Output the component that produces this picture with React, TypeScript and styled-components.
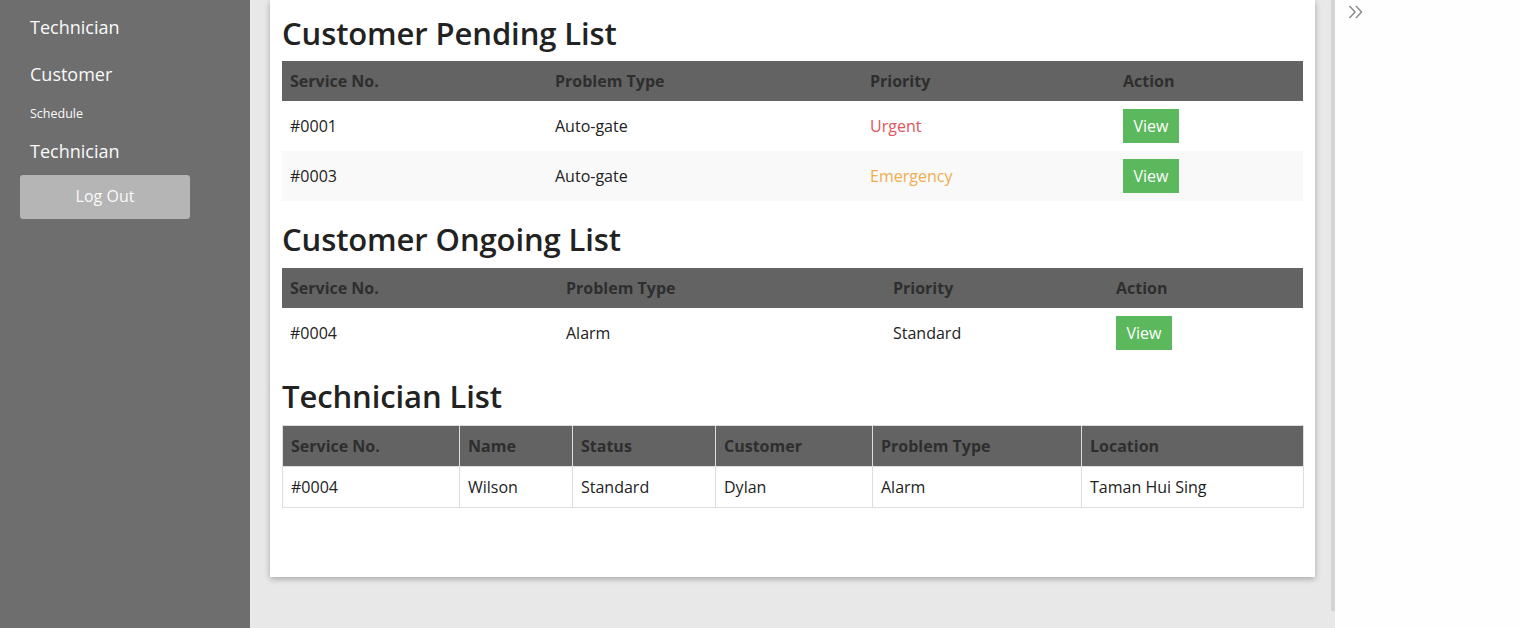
import React from "react";
import styled, { createGlobalStyle } from "styled-components";

const GlobalStyle = createGlobalStyle`
  html, body { margin: 0; padding: 0; }
  body {
    font-family: "Open Sans", "Noto Sans", "Liberation Sans", sans-serif;
    font-size: 16px;
    line-height: 1.42857;
    color: #333;
    overflow: hidden;
  }
  * { box-sizing: border-box; }
`;

const Layout = styled.div`
  display: flex;
  width: 1520px;
  height: 628px;
  overflow: hidden;
`;

const Sidebar = styled.nav`
  width: 250px;
  flex: 0 0 250px;
  background: #6e6e6e;
  padding-top: 4px;
  display: flex;
  flex-direction: column;
`;

const NavLink = styled.a<{ $small?: boolean }>`
  display: block;
  color: #fafafa;
  text-decoration: none;
  padding: ${(p) => (p.$small ? "7px 30px 5px" : "10px 30px 11px")};
  font-size: ${(p) => (p.$small ? "12.5px" : "18px")};
  line-height: ${(p) => (p.$small ? "18px" : "26px")};
`;

const LogOutButton = styled.button`
  margin-left: 20px;
  width: 170px;
  height: 44px;
  border: none;
  border-radius: 3px;
  background: #b5b5b5;
  color: #fafafa;
  font-family: inherit;
  font-size: 16px;
  padding-bottom: 3px;
`;

const Main = styled.main`
  flex: 0 0 1085px;
  background: #e8e8e8;
  display: flex;
  align-items: flex-start;
  padding-left: 20px;
`;

const Card = styled.section`
  width: 1045px;
  height: 577px;
  background: #fff;
  box-shadow: 0 2px 6px rgba(0, 0, 0, 0.28);
  padding: 16px 12px 0;
`;

const ScrollTrack = styled.div`
  margin-left: 16px;
  width: 4px;
  height: 611px;
  background: #d4d4d4;
`;

const RightPanel = styled.aside`
  flex: 1;
  background: #fefefe;
  padding: 3px 0 0 13px;
`;

const Heading = styled.h2<{ $first?: boolean }>`
  margin: ${(p) => (p.$first ? "0" : "21px")} 0 ${(p) => (p.$first ? "10px" : "11px")};
  font-size: 31px;
  font-weight: 600;
  line-height: 35px;
  color: #222;
  letter-spacing: -0.1px;
`;

const Table = styled.table<{ $bordered?: boolean }>`
  width: 100%;
  table-layout: fixed;
  border-collapse: collapse;
  margin-bottom: 20px;
  border: ${(p) => (p.$bordered ? "1px solid #ddd" : "none")};
`;

const Th = styled.th<{ $bordered?: boolean }>`
  background: #636363;
  color: #2e2e2e;
  font-weight: 700;
  text-align: left;
  height: ${(p) => (p.$bordered ? "41px" : "40px")};
  padding: 0 8px;
  font-size: 16px;
  border: ${(p) => (p.$bordered ? "1px solid #ddd" : "none")};
`;

const Tr = styled.tr<{ $striped?: boolean }>`
  background: ${(p) => (p.$striped ? "#f9f9f9" : "#fff")};
`;

const Td = styled.td<{ $bordered?: boolean; $tone?: string; $tall?: boolean }>`
  height: ${(p) => (p.$tall ? "50px" : "41px")};
  padding: 0 8px;
  vertical-align: middle;
  color: ${(p) => p.$tone || "#222"};
  border: ${(p) => (p.$bordered ? "1px solid #ddd" : "none")};
`;

const ViewButton = styled.button`
  width: 56px;
  height: 34px;
  border: none;
  border-radius: 0;
  background: #5cb85c;
  color: #fff;
  font-family: inherit;
  font-size: 16px;
  padding: 0;
  display: block;
`;

const tones: Record<string, string> = {
  Urgent: "#e0555a",
  Emergency: "#f0ad4e",
};

type Row = { no: string; type: string; priority: string };

const pending: Row[] = [
  { no: "#0001", type: "Auto-gate", priority: "Urgent" },
  { no: "#0003", type: "Auto-gate", priority: "Emergency" },
];

const ongoing: Row[] = [{ no: "#0004", type: "Alarm", priority: "Standard" }];

const techCols = ["Service No.", "Name", "Status", "Customer", "Problem Type", "Location"];
const techWidths = [177, 113, 143, 157, 209, 222];
const techRows = [["#0004", "Wilson", "Standard", "Dylan", "Alarm", "Taman Hui Sing"]];

function ServiceTable({ rows, widths }: { rows: Row[]; widths: number[] }) {
  const cols = ["Service No.", "Problem Type", "Priority", "Action"];
  return (
    <Table>
      <colgroup>
        {widths.map((w, i) => (
          <col key={i} style={{ width: w }} />
        ))}
      </colgroup>
      <thead>
        <tr>
          {cols.map((c) => (
            <Th key={c}>{c}</Th>
          ))}
        </tr>
      </thead>
      <tbody>
        {rows.map((r, i) => (
          <Tr key={r.no} $striped={i % 2 === 1}>
            <Td $tall>{r.no}</Td>
            <Td $tall>{r.type}</Td>
            <Td $tall $tone={tones[r.priority]}>{r.priority}</Td>
            <Td $tall>
              <ViewButton>View</ViewButton>
            </Td>
          </Tr>
        ))}
      </tbody>
    </Table>
  );
}

const Chevrons = () => (
  <svg width="16" height="16" viewBox="0 0 16 16" fill="none" stroke="#8c8c8c" strokeWidth="1.5">
    <polyline points="1.5,2 7,8 1.5,14" />
    <polyline points="8,2 13.5,8 8,14" />
  </svg>
);

export default function App() {
  return (
    <>
      <GlobalStyle />
      <Layout>
        <Sidebar>
          <NavLink>Technician</NavLink>
          <NavLink>Customer</NavLink>
          <NavLink $small>Schedule</NavLink>
          <NavLink>Technician</NavLink>
          <LogOutButton>Log Out</LogOutButton>
        </Sidebar>
        <Main>
          <Card>
            <Heading $first>Customer Pending List</Heading>
            <ServiceTable rows={pending} widths={[265, 315, 253, 188]} />
            <Heading>Customer Ongoing List</Heading>
            <ServiceTable rows={ongoing} widths={[276, 327, 223, 195]} />
            <Heading>Technician List</Heading>
            <Table $bordered>
              <colgroup>
                {techWidths.map((w, i) => (
                  <col key={i} style={{ width: w }} />
                ))}
              </colgroup>
              <thead>
                <tr>
                  {techCols.map((c) => (
                    <Th key={c} $bordered>
                      {c}
                    </Th>
                  ))}
                </tr>
              </thead>
              <tbody>
                {techRows.map((r, i) => (
                  <Tr key={i}>
                    {r.map((v, j) => (
                      <Td key={j} $bordered>
                        {v}
                      </Td>
                    ))}
                  </Tr>
                ))}
              </tbody>
            </Table>
          </Card>
          <ScrollTrack />
        </Main>
        <RightPanel>
          <Chevrons />
        </RightPanel>
      </Layout>
    </>
  );
}
